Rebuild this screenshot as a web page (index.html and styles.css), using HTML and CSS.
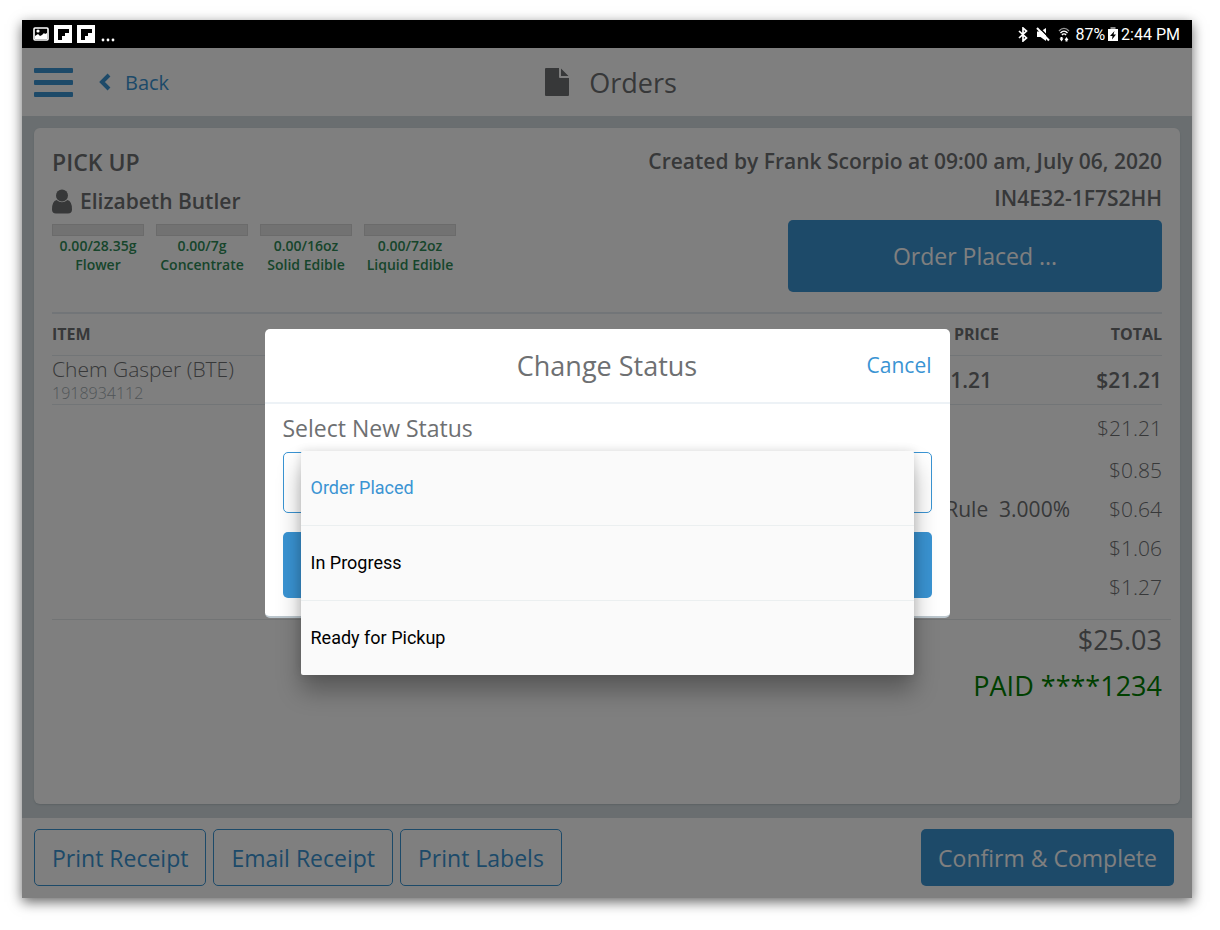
FILE: index.html
```
<!DOCTYPE html>
<html lang="en">
<head>
  <meta charset="UTF-8">
  <meta name="viewport" content="width=device-width, initial-scale=1.0">
  <title>Orders</title>
  <link rel="stylesheet" href="styles.css">
</head>
<body>
  <div class="device">
    <div class="status-bar">
      <div class="status-left">
        <svg width="16" height="16" viewBox="0 0 16 16"><rect x="1" y="2" width="14" height="12" rx="1" fill="none" stroke="#fff" stroke-width="1.6"/><path d="M2 13V10l3-2 2 2 2-1 2-2 1 1 2-1v6z" fill="#fff"/><circle cx="5" cy="5" r="1.6" fill="#fff"/></svg>
        <svg width="18" height="18" viewBox="0 0 18 18"><path fill="#fff" d="M0 0h18v18H0z"/><path d="M4 4h11v4h-4v3H8v4H4z"/></svg>
        <svg width="18" height="18" viewBox="0 0 18 18"><path fill="#fff" d="M0 0h18v18H0z"/><path d="M4 4h11v4h-4v3H8v4H4z"/></svg>
        <svg width="16" height="18" viewBox="0 0 16 18" fill="#fff"><circle cx="3" cy="15" r="1.4"/><circle cx="8" cy="15" r="1.4"/><circle cx="13" cy="15" r="1.4"/></svg>
      </div>
      <div class="status-right">
        <svg width="10" height="15" viewBox="0 0 10 15" fill="none" stroke="#fff" stroke-width="1.7"><path d="M1 4l7.500 7L5 14V1l3.500 3L1 11"/></svg>
        <svg class="mute" width="14" height="15" viewBox="0 0 14 15"><path d="M1 4.500h3.500L10 1v13l-5.500-4H1z" fill="#fff"/><path d="M2.500 0L14 11.500" stroke="#000" stroke-width="1.500"/><path d="M1 1l12 12.500" stroke="#fff" stroke-width="2"/></svg>
        <svg class="wifi" width="12" height="15" viewBox="0 0 12 15" fill="none" stroke="#fff"><path d="M1 4c3-3.500 7-3.500 10 0" stroke="#999" stroke-width="1.300"/><path d="M2.500 6c2-2.500 5-2.500 7 0M4 8c1-1.500 3-1.500 4 0" stroke-width="1.400"/><path d="M1.500 11.500h1V10h2v1.500h1l-2 3zM6.500 13h1v1.500h2V13h1l-2-3z" fill="#fff" stroke="none"/></svg>
        <span>87%</span>
        <svg width="10" height="15" viewBox="0 0 10 15"><path d="M2.500 0h5v2h-5z" fill="#888"/><path d="M0 2h10v12H0z" fill="#fff"/><path d="M6.500 4L2 9h2.500L4 12.500 8 7.500H5.500z"/></svg>
        <span>2:44 PM</span>
      </div>
    </div>

    <div class="app">
      <header class="top-bar">
        <div class="nav">
          <button class="menu-btn" aria-label="Menu"><span></span><span></span><span></span></button>
          <a class="back" href="#">
            <svg width="12" height="18" viewBox="0 0 12 18" fill="none" stroke="currentColor" stroke-width="4"><path d="M10 2L3 9l7 7"/></svg>
            Back
          </a>
        </div>
        <h1>
          <svg width="24" height="28" viewBox="0 0 24 28" fill="currentColor"><path d="M1 0h13v9q0 1 1 1h9v17q0 1-1 1H1q-1 0-1-1V1q0-1 1-1zM16 0.500L23.500 8H16z"/></svg>
          Orders
        </h1>
      </header>

      <main>
        <section class="card">
          <div class="summary">
            <div class="customer">
              <h2>PICK UP</h2>
              <p class="name">
                <svg width="20" height="25" viewBox="0 0 20 25" fill="currentColor"><circle cx="10" cy="6.500" r="6"/><path d="M4.500 11q5.500 4.500 11 0Q20 12 20 20.500q0 4-4 4H4q-4 0-4-4Q0 12 4.500 11z"/></svg>
                Elizabeth Butler
              </p>
              <ul class="limits">
                <li><span class="bar"></span>0.00/28.35g<br>Flower</li>
                <li><span class="bar"></span>0.00/7g<br>Concentrate</li>
                <li><span class="bar"></span>0.00/16oz<br>Solid Edible</li>
                <li><span class="bar"></span>0.00/72oz<br>Liquid Edible</li>
              </ul>
            </div>
            <div class="order-info">
              <p>Created by Frank Scorpio at 09:00 am, July 06, 2020</p>
              <p>IN4E32-1F7S2HH</p>
              <button class="btn btn-primary btn-status">Order Placed ...</button>
            </div>
          </div>

          <table class="items">
            <thead>
              <tr><th class="item">ITEM</th><th class="price">PRICE</th><th>TOTAL</th></tr>
            </thead>
            <tbody>
              <tr>
                <td class="item">Chem Gasper (BTE)<small>1918934112</small></td>
                <td class="price">$21.21</td>
                <td>$21.21</td>
              </tr>
            </tbody>
          </table>

          <table class="totals">
            <tbody>
              <tr class="subtotal"><th></th><td>$21.21</td></tr>
              <tr><th></th><td>$0.85</td></tr>
              <tr><th>Rule &nbsp;3.000%</th><td>$0.64</td></tr>
              <tr><th></th><td>$1.06</td></tr>
              <tr><th></th><td>$1.27</td></tr>
            </tbody>
          </table>
          <div class="grand">
            <p>$25.03</p>
            <p class="paid">PAID ****1234</p>
          </div>
        </section>
      </main>

      <footer class="actions">
        <button class="btn btn-outline">Print Receipt</button>
        <button class="btn btn-outline">Email Receipt</button>
        <button class="btn btn-outline">Print Labels</button>
        <button class="btn btn-primary btn-confirm">Confirm &amp; Complete</button>
      </footer>

      <div class="overlay">
        <div class="modal" role="dialog" aria-labelledby="modalTitle">
          <div class="modal-head">
            <h2 id="modalTitle">Change Status</h2>
            <a href="#">Cancel</a>
          </div>
          <div class="modal-body">
            <label for="status">Select New Status</label>
            <div class="field">
              <select id="status">
                <option>Order Placed</option>
                <option>In Progress</option>
                <option>Ready for Pickup</option>
              </select>
              <ul class="dropdown">
                <li><button class="selected">Order Placed</button></li>
                <li><button>In Progress</button></li>
                <li><button>Ready for Pickup</button></li>
              </ul>
            </div>
            <button class="btn btn-primary btn-save" aria-label="Save status"></button>
          </div>
        </div>
      </div>
    </div>
  </div>
</body>
</html>
```
FILE: styles.css
```
* {
  margin: 0;
  padding: 0;
  box-sizing: border-box;
}

body {
  min-height: 100vh;
  display: flex;
  padding: 20px 28px 32px 22px;
  font-family: 'Open Sans', sans-serif;
  color: #6e7072;
  background: #fff;
}

ul {
  list-style: none;
}

a {
  color: #3a94d3;
  text-decoration: none;
}

button {
  font-family: inherit;
  border: none;
  background: none;
  cursor: pointer;
}

.device {
  flex: 1;
  display: flex;
  flex-direction: column;
  box-shadow: 0 4px 12px rgba(0, 0, 0, 0.6);
}

/* status bar */
.status-bar {
  height: 28px;
  padding: 0 12px 0 11px;
  display: flex;
  justify-content: space-between;
  align-items: center;
  background: #000;
  color: #fff;
  font: 16px 'Roboto', sans-serif;
}

.status-left,
.status-right {
  display: flex;
  align-items: center;
}

.status-left {
  gap: 5px;
}

.status-right {
  gap: 3px;
}

.mute {
  margin: 0 5px;
}

.wifi {
  margin-right: 2px;
}

.app {
  flex: 1;
  display: flex;
  flex-direction: column;
  position: relative;
}

/* top bar */
.top-bar {
  height: 68px;
  padding: 0 12px;
  display: grid;
  grid-template-columns: 1fr auto 1fr;
  align-items: center;
  background: #fff;
}

.nav {
  display: flex;
  align-items: center;
  gap: 26px;
}

.menu-btn {
  width: 39px;
  display: flex;
  flex-direction: column;
  gap: 7px;
}

.menu-btn span {
  height: 5px;
  border-radius: 1px;
  background: #3a94d3;
}

.back {
  display: flex;
  align-items: center;
  gap: 14px;
  font-size: 20px;
}

h1 {
  display: flex;
  align-items: center;
  gap: 20px;
  padding-left: 8px;
  font-size: 27px;
  font-weight: 400;
}

/* order card */
main {
  flex: 1;
  display: flex;
  padding: 12px 12px 14px;
  background: #d4dde1;
}

.card {
  flex: 1;
  padding: 18px;
  border-radius: 6px;
  background: #fff;
  box-shadow: 0 1px 2px #b8c2c7;
}

.summary {
  display: flex;
  justify-content: space-between;
  height: 166px;
}

.summary h2 {
  font-size: 23px;
  font-weight: 600;
  line-height: 32px;
}

.name {
  display: flex;
  align-items: center;
  gap: 8px;
  margin: 10px 0;
  font-size: 21px;
  font-weight: 600;
  line-height: 26px;
}

.limits {
  display: flex;
  gap: 12px;
}

.limits li {
  width: 92px;
  font-size: 14px;
  font-weight: 600;
  line-height: 19px;
  text-align: center;
  white-space: nowrap;
  color: #2e8b57;
}

.bar {
  display: block;
  height: 12px;
  border: 1px solid #d6d6d6;
  background: #e4e4e4;
}

.order-info {
  font-size: 21px;
  font-weight: 600;
  line-height: 30px;
  text-align: right;
}

.order-info p {
  margin-bottom: 7px;
}

.btn {
  border-radius: 5px;
  font-size: 23px;
}

.btn-primary {
  background: #3a94d3;
  color: #fff;
}

.btn-outline {
  border: 1px solid #3a94d3;
  color: #3a94d3;
}

.btn-status {
  width: 374px;
  height: 72px;
}

.items,
.totals {
  width: 100%;
  border-collapse: collapse;
}

.items {
  border-top: 2px solid #e4eaf0;
}

.items tr {
  border-bottom: 1px solid #e4eaee;
}

.items th {
  height: 42px;
  font-size: 16px;
  font-weight: 700;
  text-align: right;
}

.items td {
  height: 49px;
  font-size: 21px;
  font-weight: 600;
  text-align: right;
}

.items th.item,
.items td.item {
  text-align: left;
}

.items td.item {
  font-weight: 300;
  line-height: 26px;
}

.items small {
  display: block;
  font-size: 16px;
  line-height: 22px;
  color: #a2abb0;
}

.items .price {
  width: 400px;
}

.items th:last-child {
  width: 163px;
}

.items td.price {
  padding-right: 7px;
}

.totals {
  font-size: 21px;
}

.totals th,
.totals td {
  height: 39px;
  font-weight: 400;
  text-align: right;
}

.totals td {
  width: 92px;
  font-weight: 300;
}

.totals .subtotal td {
  height: 46px;
}

.grand {
  margin: 12px -9px 0 0;
  padding-right: 9px;
  border-top: 1px solid #e4e8ea;
  font-size: 27px;
  line-height: 40px;
  text-align: right;
}

.paid {
  margin-top: 6px;
  color: #008000;
}

/* bottom buttons */
.actions {
  height: 80px;
  padding: 0 18px 1px 12px;
  display: flex;
  align-items: center;
  gap: 7px;
  background: #fff;
}

.actions .btn {
  height: 57px;
  padding: 0 17px;
}

.actions .btn-confirm {
  margin-left: auto;
}

/* change status dialog */
.overlay {
  position: absolute;
  inset: 0;
  display: flex;
  justify-content: center;
  align-items: center;
  background: rgba(0, 0, 0, 0.5);
}

.modal {
  width: 685px;
  max-width: 90%;
  border-radius: 5px;
  border-bottom: 2px solid #bcc7ce;
  background: #fff;
}

.modal-head {
  height: 75px;
  padding: 0 18px;
  display: grid;
  grid-template-columns: 1fr auto 1fr;
  align-items: center;
  border-bottom: 2px solid #edf2f6;
  font-size: 21px;
}

.modal-head h2 {
  grid-column: 2;
  font-size: 27px;
  font-weight: 400;
}

.modal-head a {
  text-align: right;
}

.modal-body {
  padding: 8px 18px 18px;
}

.modal-body label {
  display: block;
  font-size: 23px;
  line-height: 32px;
}

.field {
  position: relative;
  margin: 8px 0 19px;
}

.field select {
  display: block;
  width: 100%;
  height: 61px;
  padding: 0 18px;
  border: 1px solid #3a94d3;
  border-radius: 5px;
  background: #fff;
  appearance: none;
  font: 23px 'Open Sans', sans-serif;
  color: #3a94d3;
}

.btn-save {
  display: block;
  width: 100%;
  height: 66px;
}

.dropdown {
  position: absolute;
  top: -1px;
  left: 18px;
  right: 18px;
  border-radius: 2px;
  background: #fafafa;
  box-shadow: 0 16px 24px rgba(0, 0, 0, 0.3), 0 0 10px rgba(0, 0, 0, 0.12);
}

.dropdown li + li {
  border-top: 1px solid #ebeff0;
}

.dropdown button {
  width: 100%;
  height: 74px;
  padding: 0 10px;
  font: 18px 'Roboto', sans-serif;
  text-align: left;
  color: #000;
}

.dropdown button.selected {
  color: #3a94d3;
}
```
